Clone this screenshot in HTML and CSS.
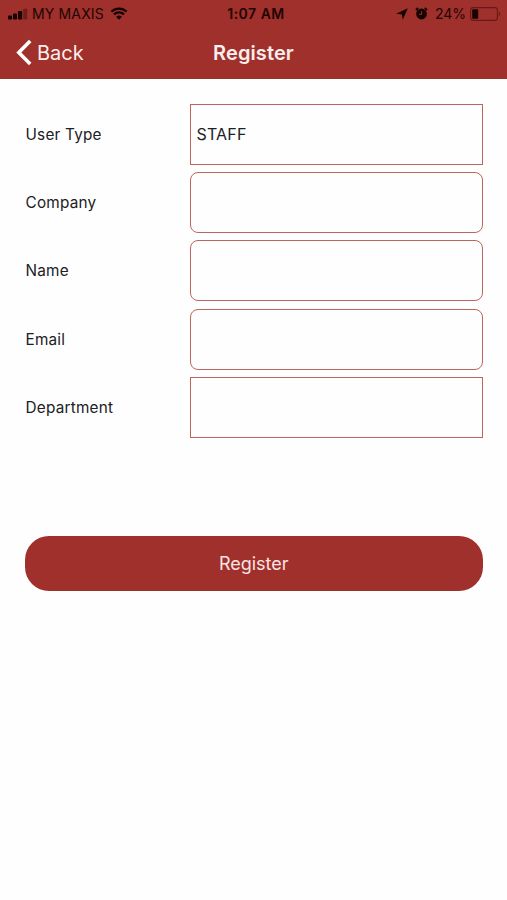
FILE: index.html
```html
<!DOCTYPE html>
<html>
	<head>
		<meta charset="UTF-8">
		<title>Register</title>
		<link rel="stylesheet" href="styles.css">
	</head>
	<body>
		<div class="header">
			<div class="status">
				<div class="status-left">
					<svg class="signal" width="20" height="12" viewBox="0 0 20 12">
						<rect x="0" y="7.5" width="4" height="4" rx="0.8"/>
						<rect x="5" y="5.5" width="4" height="6" rx="0.8"/>
						<rect x="10" y="3" width="4.2" height="8.5" rx="0.8"/>
						<rect class="dim" x="15.2" y="0.8" width="4" height="10.7" rx="0.8"/>
					</svg>
					<span class="carrier">MY MAXIS</span>
					<svg class="wifi" width="18" height="13" viewBox="0 0 18 13">
						<path d="M1.4 4.6a11 11 0 0 1 15.2 0M4 7.4a7.2 7.2 0 0 1 10 0"/>
						<path class="dot" d="M9 12.8L6.1 9.8a4.2 4.2 0 0 1 5.8 0z"/>
					</svg>
				</div>
				<div class="time">1:07 AM</div>
				<div class="status-right">
					<svg class="arrow" width="12" height="12" viewBox="0 0 12 12">
						<path d="M11.8 0.2L6.8 11.8L5.9 6.4L0.2 5.7z"/>
					</svg>
					<svg class="alarm" width="13" height="13" viewBox="0 0 13 13">
						<circle cx="6.5" cy="7" r="5.4"/>
						<path class="bell" d="M0.9 3L3.2 1M12.1 3L9.8 1"/>
						<path class="hands" d="M6.7 4.2V7.3H4.2"/>
					</svg>
					<span class="percent">24%</span>
					<svg class="battery" width="31" height="14" viewBox="0 0 31 14">
						<rect class="case" x="0.6" y="0.6" width="26.8" height="12.8" rx="2.6"/>
						<rect x="2.2" y="2.2" width="6" height="9.6" rx="0.7"/>
						<path class="cap" d="M28.8 4.6q3 2.4 0 4.8z"/>
					</svg>
				</div>
			</div>
			<div class="nav">
				<a class="back">
					<svg width="16" height="27" viewBox="0 0 16 27">
						<path d="M14.2 2L2.8 13.5L14.2 25"/>
					</svg>
					<span>Back</span>
				</a>
				<h1 class="title">Register</h1>
			</div>
		</div>
		<form class="form">
			<div class="row">
				<label>User Type</label>
				<div class="field">STAFF</div>
			</div>
			<div class="row">
				<label>Company</label>
				<div class="field round"></div>
			</div>
			<div class="row">
				<label>Name</label>
				<div class="field round"></div>
			</div>
			<div class="row">
				<label>Email</label>
				<div class="field round"></div>
			</div>
			<div class="row">
				<label>Department</label>
				<div class="field"></div>
			</div>
			<button type="button" class="btn">Register</button>
		</form>
	</body>
</html>
```

FILE: styles.css
```css
*{
	margin:0px;
	padding:0px;
	box-sizing:border-box;
}
body{
	background:#fefefe;
	color:#202024;
	font-family:Inter, "Liberation Sans", sans-serif;
}
.header{
	height:79px;
	background:#a0302b;
}
.status{
	height:27px;
	display:grid;
	grid-template-columns:1fr auto 1fr;
	align-items:center;
	padding:0 6px 0 8px;
	color:#200403;
	font-size:14px;
	line-height:20px;
}
.status svg{
	fill:#160302;
}
.status-left,
.status-right{
	display:flex;
	align-items:center;
}
.status-right{
	justify-content:flex-end;
}
.signal .dim{
	fill:#6e1f1b;
}
.carrier{
	margin-left:4px;
	letter-spacing:0.15px;
}
.wifi{
	margin-left:6px;
}
.status .wifi path{
	fill:none;
	stroke:#160302;
	stroke-width:2.2;
}
.status .wifi .dot{
	fill:#160302;
	stroke:none;
}
.time{
	padding-left:3px;
	font-weight:600;
	letter-spacing:0.5px;
}
.alarm{
	margin-left:7px;
}
.alarm path{
	fill:none;
	stroke:#160302;
	stroke-width:1.8;
}
.status .alarm .hands{
	stroke:#a0302b;
	stroke-width:1;
}
.percent{
	margin-left:7px;
}
.battery{
	margin-left:4px;
}
.status .battery .case{
	fill:none;
	stroke:#671a17;
	stroke-width:1.1;
}
.status .battery .cap{
	fill:#671a17;
}
.nav{
	height:51px;
	display:grid;
	grid-template-columns:1fr auto 1fr;
	align-items:center;
	padding:0 16px;
	color:#fbeeed;
}
.back{
	display:flex;
	align-items:center;
	font-size:20px;
}
.back span{
	margin-left:5px;
}
.back path{
	fill:none;
	stroke:#fff;
	stroke-width:3.6;
}
.title{
	font-size:20px;
	font-weight:600;
	letter-spacing:0.1px;
}
.form{
	padding:24.6px 24.5px 0 25px;
}
.row{
	display:grid;
	grid-template-columns:165px 1fr;
	align-items:center;
	margin-bottom:7.4px;
	font-size:15.3px;
	letter-spacing:0.22px;
}
.row label{
	padding-left:0.5px;
}
.field{
	height:61px;
	padding-left:5.4px;
	border:1px solid #bd645f;
	font-size:16px;
	line-height:58px;
}
.round{
	border-radius:8px;
}
.btn{
	display:block;
	width:100%;
	height:55px;
	margin-top:97.6px;
	border:none;
	border-radius:24px;
	background:#a0302b;
	color:#fbe3e1;
	font-family:inherit;
	font-size:18px;
}
```
